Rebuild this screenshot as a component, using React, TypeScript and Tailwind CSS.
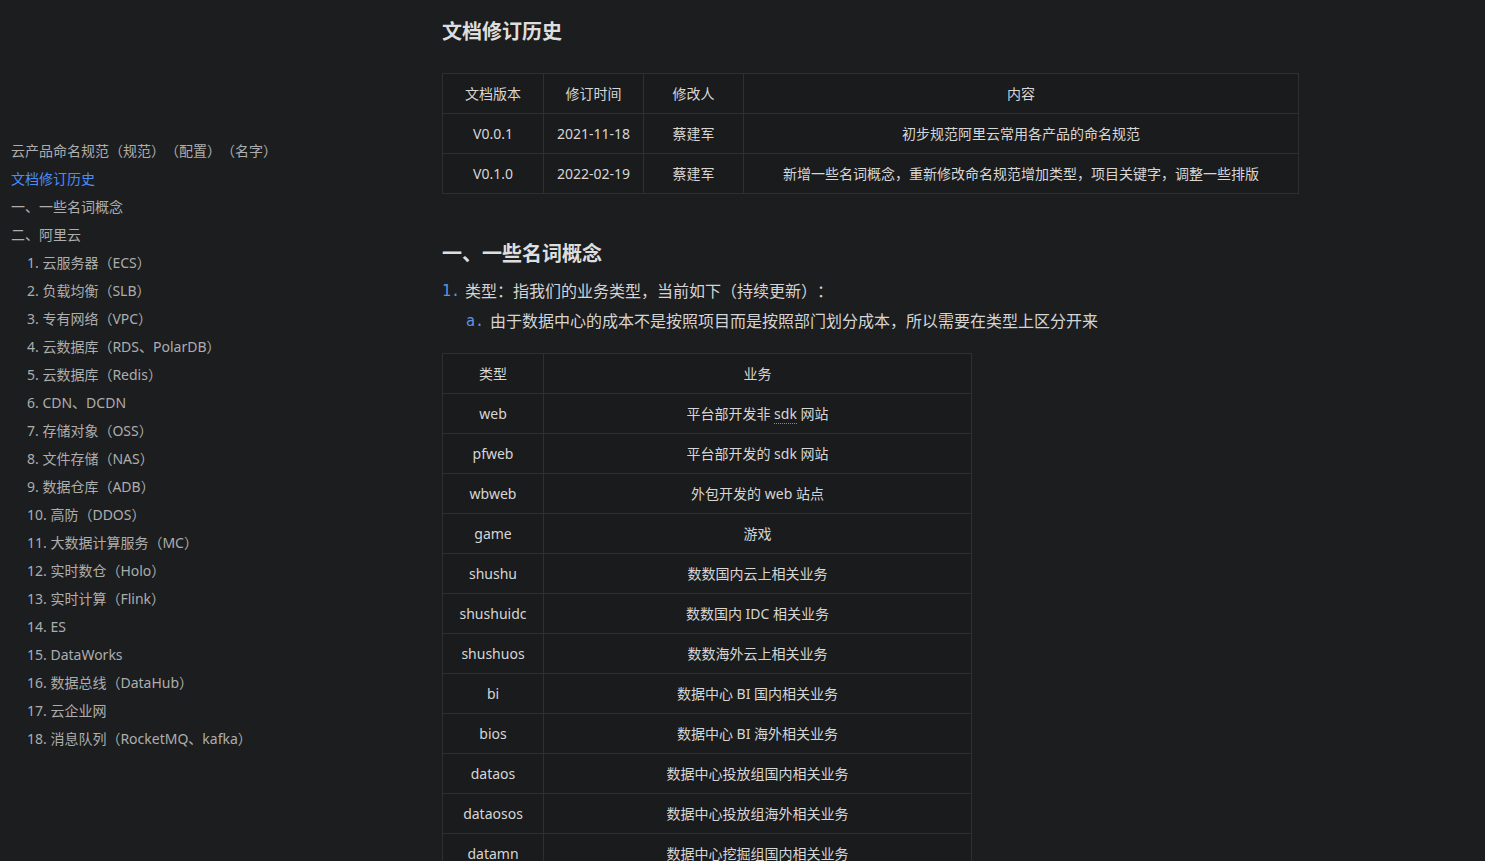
import React from "react";

const font = {
  fontFamily: '"Segoe UI", "Noto Sans", "Noto Sans CJK SC", sans-serif',
};

const toc: { text: string; level: number; active?: boolean }[] = [
  { text: "云产品命名规范（规范）（配置）（名字）", level: 0 },
  { text: "文档修订历史", level: 0, active: true },
  { text: "一、一些名词概念", level: 0 },
  { text: "二、阿里云", level: 0 },
  { text: "1. 云服务器（ECS）", level: 1 },
  { text: "2. 负载均衡（SLB）", level: 1 },
  { text: "3. 专有网络（VPC）", level: 1 },
  { text: "4. 云数据库（RDS、PolarDB）", level: 1 },
  { text: "5. 云数据库（Redis）", level: 1 },
  { text: "6. CDN、DCDN", level: 1 },
  { text: "7. 存储对象（OSS）", level: 1 },
  { text: "8. 文件存储（NAS）", level: 1 },
  { text: "9. 数据仓库（ADB）", level: 1 },
  { text: "10. 高防（DDOS）", level: 1 },
  { text: "11. 大数据计算服务（MC）", level: 1 },
  { text: "12. 实时数仓（Holo）", level: 1 },
  { text: "13. 实时计算（Flink）", level: 1 },
  { text: "14. ES", level: 1 },
  { text: "15. DataWorks", level: 1 },
  { text: "16. 数据总线（DataHub）", level: 1 },
  { text: "17. 云企业网", level: 1 },
  { text: "18. 消息队列（RocketMQ、kafka）", level: 1 },
];

const history = [
  ["V0.0.1", "2021-11-18", "蔡建军", "初步规范阿里云常用各产品的命名规范"],
  ["V0.1.0", "2022-02-19", "蔡建军", "新增一些名词概念，重新修改命名规范增加类型，项目关键字，调整一些排版"],
];

const types: [string, React.ReactNode][] = [
  ["web", <>平台部开发非 <span className="border-b border-dotted border-[#8a8a8a]">sdk</span> 网站</>],
  ["pfweb", "平台部开发的 sdk 网站"],
  ["wbweb", "外包开发的 web 站点"],
  ["game", "游戏"],
  ["shushu", "数数国内云上相关业务"],
  ["shushuidc", "数数国内 IDC 相关业务"],
  ["shushuos", "数数海外云上相关业务"],
  ["bi", "数据中心 BI 国内相关业务"],
  ["bios", "数据中心 BI 海外相关业务"],
  ["dataos", "数据中心投放组国内相关业务"],
  ["dataosos", "数据中心投放组海外相关业务"],
  ["datamn", "数据中心挖掘组国内相关业务"],
];

const cell = "border border-[#2e2f31] h-[40px] px-3 text-center align-middle";

export default function App() {
  return (
    <div
      className="w-[1485px] h-[861px] overflow-hidden bg-[#1c1d1f] text-[#d4d4d4] flex [text-spacing-trim:space-all]"
      style={font}
    >
      <aside className="w-[442px] shrink-0 pl-[11px] pt-[137px]">
        {toc.map((t, i) => (
          <div
            key={i}
            className={`h-[28px] leading-[28px] text-[14px] whitespace-nowrap ${
              t.level === 1 ? "pl-[16px]" : ""
            } ${t.active ? "text-[#4b8df8]" : "text-[#adadad]"}`}
          >
            {t.text}
          </div>
        ))}
      </aside>
      <main className="flex-1 pt-[17px]">
        <h1 className="text-[20px] font-bold leading-[30px] text-[#dedede]">
          文档修订历史
        </h1>
        <table className="mt-[26px] border-collapse text-[14px] text-[#d6d6d6] w-[857px] bg-[#1a1b1c]">
          <colgroup>
            <col className="w-[101px]" />
            <col className="w-[100px]" />
            <col className="w-[100px]" />
            <col />
          </colgroup>
          <thead>
            <tr>
              <th className={`${cell} font-normal`}>文档版本</th>
              <th className={`${cell} font-normal`}>修订时间</th>
              <th className={`${cell} font-normal`}>修改人</th>
              <th className={`${cell} font-normal`}>内容</th>
            </tr>
          </thead>
          <tbody>
            {history.map((r, i) => (
              <tr key={i}>
                {r.map((c, j) => (
                  <td key={j} className={cell}>
                    {c}
                  </td>
                ))}
              </tr>
            ))}
          </tbody>
        </table>

        <h2 className="mt-[45px] text-[20px] font-bold leading-[30px] text-[#dedede]">
          一、一些名词概念
        </h2>
        <div className="mt-[7px] text-[16px] leading-[30px] text-[#d4d4d4]">
          <div className="flex">
            <span
              className="w-[23px] text-[#5d92e0] text-[15px]"
              style={{ fontFamily: '"DejaVu Sans Mono", monospace' }}
            >
              1.
            </span>
            <span>类型：指我们的业务类型，当前如下（持续更新）：</span>
          </div>
          <div className="flex pl-[24px]">
            <span
              className="w-[24px] text-[#5d92e0] text-[15px]"
              style={{ fontFamily: '"DejaVu Sans Mono", monospace' }}
            >
              a.
            </span>
            <span>由于数据中心的成本不是按照项目而是按照部门划分成本，所以需要在类型上区分开来</span>
          </div>
        </div>

        <table className="mt-[17px] border-collapse text-[14px] text-[#d6d6d6] w-[530px] bg-[#1a1b1c]">
          <colgroup>
            <col className="w-[101px]" />
            <col />
          </colgroup>
          <thead>
            <tr>
              <th className={`${cell} font-normal`}>类型</th>
              <th className={`${cell} font-normal`}>业务</th>
            </tr>
          </thead>
          <tbody>
            {types.map(([a, b], i) => (
              <tr key={i}>
                <td className={cell}>{a}</td>
                <td className={cell}>{b}</td>
              </tr>
            ))}
          </tbody>
        </table>
      </main>
    </div>
  );
}
